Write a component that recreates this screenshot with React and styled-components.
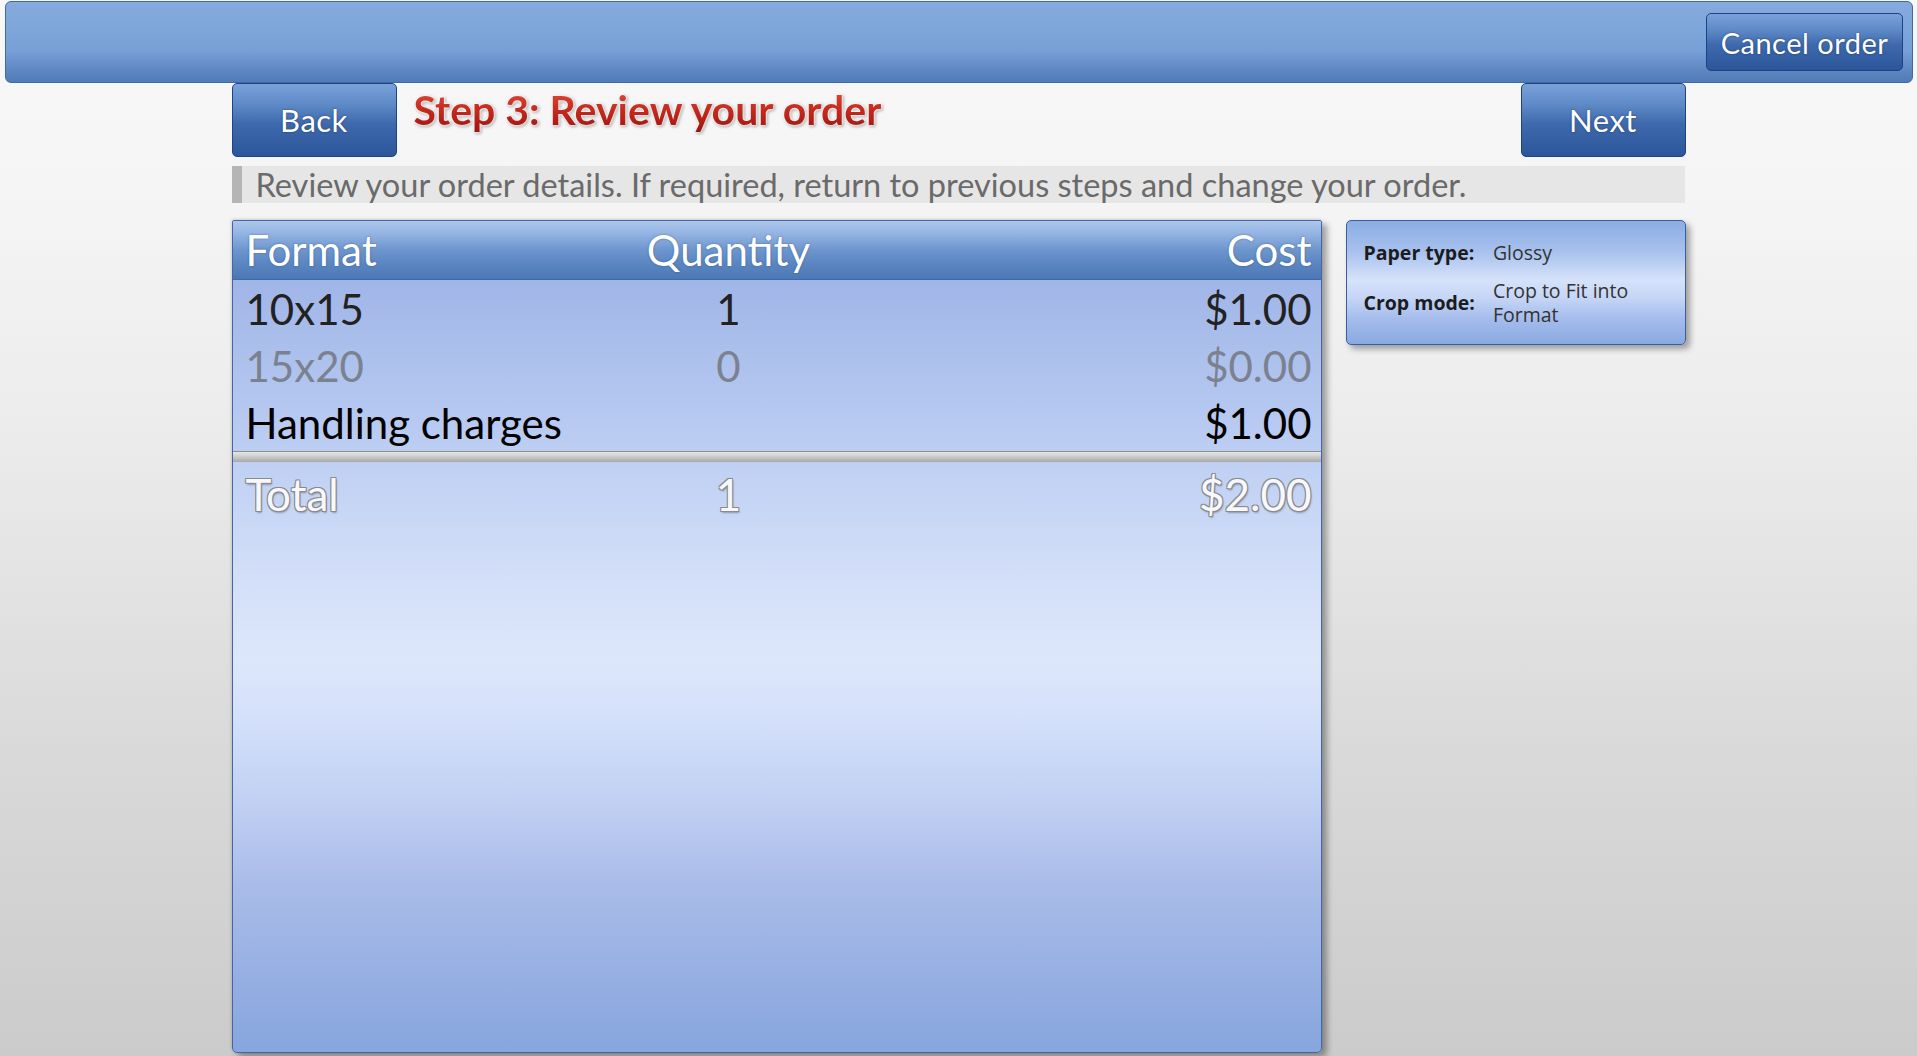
import React from 'react';
import styled, { createGlobalStyle } from 'styled-components';

const GlobalStyle = createGlobalStyle`
  html, body {
    margin: 0;
    padding: 0;
  }
  body {
    min-height: 100vh;
    background: linear-gradient(to bottom, #f8f8f8 0%, #f5f5f5 18%, #ececec 40%, #dadada 70%, #cbcbcb 100%);
    font-family: Lato, "Open Sans", sans-serif;
    overflow: hidden;
  }
`;

const Page = styled.div`
  height: 1056px;
  display: flex;
  flex-direction: column;
`;

const TopBar = styled.div`
  margin: 1px 4px 0 5px;
  height: 80px;
  display: flex;
  align-items: center;
  justify-content: flex-end;
  padding-right: 9px;
  border: 1px solid #3f6aaa;
  border-radius: 6px;
  background: linear-gradient(to bottom, #85aadd 0%, #7ea5da 40%, #779fd6 62%, #6990cb 75%, #4f7bb6 100%);
`;

const Button = styled.button`
  width: ${p => p.$w}px;
  height: ${p => p.$h}px;
  border: 1px solid #1c4484;
  border-radius: 5px;
  background: linear-gradient(to bottom, #7aa2da 0%, #5d88c6 30%, #3e69ac 55%, #2b5699 100%);
  color: #fff;
  font-family: Lato, "Open Sans", sans-serif;
  font-size: ${p => p.$size}px;
  letter-spacing: 0.5px;
  text-shadow: 0 0 2px rgba(20, 40, 80, 0.7);
  cursor: pointer;
  padding: 0;
`;

const Content = styled.div`
  width: 1454px;
  margin: 0 auto;
  display: flex;
  flex-direction: column;
`;

const HeaderRow = styled.div`
  display: flex;
  align-items: flex-start;
  height: 74px;
`;

const Title = styled.h1`
  margin: 3px 0 0 17px;
  font-family: Lato, sans-serif;
  font-weight: 700;
  font-size: 41px;
  line-height: 48px;
  background: linear-gradient(to bottom, #e4503c 0%, #c42a1e 50%, #9a120e 100%);
  -webkit-background-clip: text;
  background-clip: text;
  color: transparent;
  filter: drop-shadow(0 0 1px #ffffff) drop-shadow(0 0 1px #ffffff) drop-shadow(1px 1px 1px rgba(0, 0, 0, 0.35));
`;

const Spacer = styled.div`
  flex: 1;
`;

const Description = styled.div`
  margin-top: 9px;
  width: 1453px;
  height: 37px;
  box-sizing: border-box;
  background: #e6e6e6;
  border-left: 10px solid #b5b5b5;
  padding-left: 14px;
  font-size: 32.5px;
  line-height: 37px;
  color: #6a6a6a;
  white-space: nowrap;
`;

const Main = styled.div`
  margin-top: 17px;
  display: flex;
  align-items: flex-start;
  gap: 24px;
`;

const Table = styled.div`
  width: 1090px;
  height: 833px;
  box-sizing: border-box;
  display: flex;
  flex-direction: column;
  border: 1px solid #4566a6;
  border-radius: 2px 2px 5px 5px;
  box-shadow: 5px 4px 6px rgba(0, 0, 0, 0.35), -1px -1px 3px rgba(0, 0, 0, 0.12);
  background: linear-gradient(to bottom,
    #96aee1 0%, #a4b9e9 10%, #b4c7f0 22%, #c2d2f4 31%, #d2def8 42%, #dde7fb 53%,
    #d4e0fa 60%, #c1d0f3 70%, #a9bce9 80%, #98b0e3 90%, #86a6dd 100%);
  overflow: hidden;
`;

const Row = styled.div`
  display: grid;
  grid-template-columns: 350px 266px 1fr;
  align-items: center;
  height: ${p => p.$h}px;
  padding: 0 9px 0 13px;
  font-size: ${p => p.$size || 42}px;
  color: ${p => p.$color};
`;

const HeadRow = styled(Row)`
  color: #ffffff;
  text-shadow: 0 0 2px rgba(30, 60, 110, 0.6);
  border-bottom: 1px solid #3f6aa8;
  background: linear-gradient(to bottom, #adc7ee 0%, #8fb0e0 25%, #6d95cd 50%, #5a85c1 75%, #4b78b4 100%);
`;

const TotalRow = styled(Row)`
  color: #f6f8fd;
  text-shadow: 1px 1px 0 #8a8a8a, -1px -1px 0 #8a8a8a, 1px -1px 0 #8a8a8a, -1px 1px 0 #8a8a8a, 1px 2px 2px rgba(0, 0, 0, 0.3);
`;

const Cell = styled.span`
  text-align: ${p => p.$align || 'left'};
`;

const Separator = styled.div`
  height: 10px;
  border-top: 1px solid #8e8e8e;
  background: linear-gradient(to bottom, #e6e6e6 0%, #d0d0d0 40%, #a8a8a8 100%);
`;

const InfoPanel = styled.div`
  width: 340px;
  height: 125px;
  box-sizing: border-box;
  border: 1px solid #3b5f9c;
  border-radius: 5px;
  box-shadow: 4px 4px 6px rgba(0, 0, 0, 0.35);
  background: linear-gradient(to bottom, #8badE3 0%, #a8c1ee 25%, #d6e2fa 48%, #c6d6f6 62%, #a4bcec 80%, #8aa9e1 100%);
  padding: 20px 17px 0 17px;
  display: grid;
  grid-template-columns: auto 1fr;
  grid-auto-rows: min-content;
  column-gap: 18px;
  row-gap: 14px;
  align-items: center;
  font-family: "Open Sans", sans-serif;
  font-size: 19.5px;
  line-height: 24px;
`;

const Label = styled.span`
  font-weight: 700;
  color: #1c1c1c;
`;

const Value = styled.span`
  color: #333333;
`;

const rows = [
  { format: '10x15', qty: '1', cost: '$1.00', color: '#222222' },
  { format: '15x20', qty: '0', cost: '$0.00', color: '#7c8190' },
  { format: 'Handling charges', qty: '', cost: '$1.00', color: '#000000' },
];

export default function App() {
  return (
    <Page>
      <GlobalStyle />
      <TopBar>
        <Button $w={197} $h={58} $size={29}>Cancel order</Button>
      </TopBar>
      <Content>
        <HeaderRow>
          <Button $w={165} $h={74} $size={31}>Back</Button>
          <Title>Step 3: Review your order</Title>
          <Spacer />
          <Button $w={165} $h={74} $size={31}>Next</Button>
        </HeaderRow>
        <Description>
          Review your order details. If required, return to previous steps and change your order.
        </Description>
        <Main>
          <Table>
            <HeadRow $h={58}>
              <Cell>Format</Cell>
              <Cell $align="center">Quantity</Cell>
              <Cell $align="right">Cost</Cell>
            </HeadRow>
            {rows.map(r => (
              <Row key={r.format} $h={57} $color={r.color}>
                <Cell>{r.format}</Cell>
                <Cell $align="center">{r.qty}</Cell>
                <Cell $align="right">{r.cost}</Cell>
              </Row>
            ))}
            <Separator />
            <TotalRow $h={64} $size={44}>
              <Cell>Total</Cell>
              <Cell $align="center">1</Cell>
              <Cell $align="right">$2.00</Cell>
            </TotalRow>
          </Table>
          <InfoPanel>
            <Label>Paper type:</Label>
            <Value>Glossy</Value>
            <Label>Crop mode:</Label>
            <Value>Crop to Fit into Format</Value>
          </InfoPanel>
        </Main>
      </Content>
    </Page>
  );
}
